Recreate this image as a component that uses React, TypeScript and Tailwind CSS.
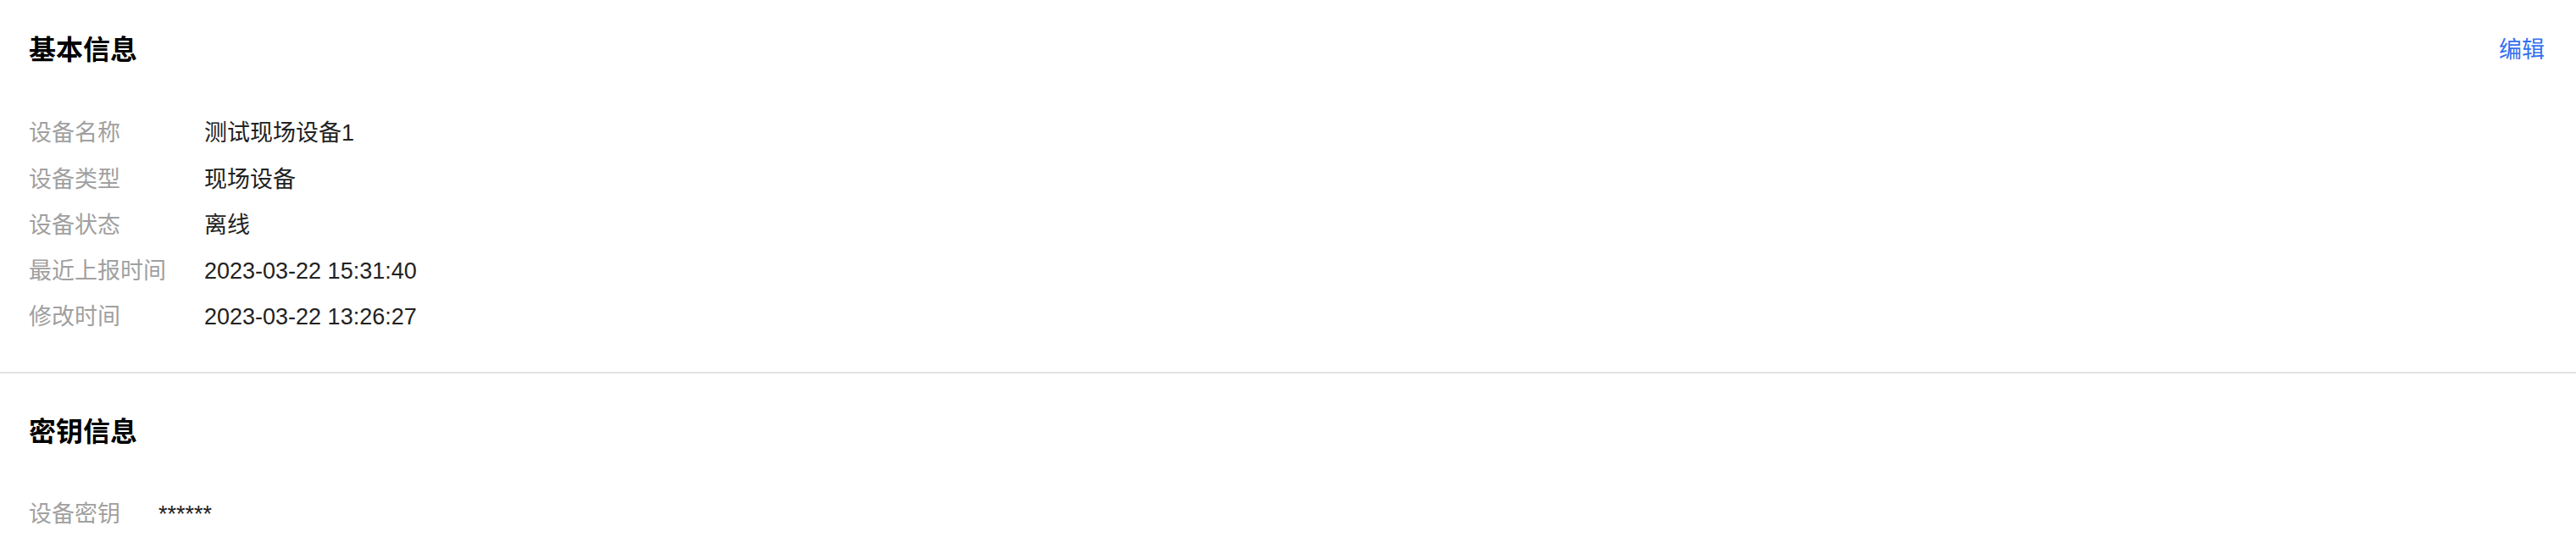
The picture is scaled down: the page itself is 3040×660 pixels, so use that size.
const basicInfo = [
  { label: "设备名称", value: "测试现场设备1" },
  { label: "设备类型", value: "现场设备" },
  { label: "设备状态", value: "离线" },
  { label: "最近上报时间", value: "2023-03-22 15:31:40" },
  { label: "修改时间", value: "2023-03-22 13:26:27" },
];

const secretInfo = [{ label: "设备密钥", value: "******" }];

const font = {
  fontFamily: '"Liberation Sans", Arial, "Noto Sans CJK SC", sans-serif',
};

function InfoTable({ rows }: { rows: { label: string; value: string }[] }) {
  return (
    <table className="border-collapse text-[27px]">
      <tbody>
        {rows.map((r) => (
          <tr key={r.label} className="h-[54.2px]">
            <td className="p-0 pr-[45px] text-[#a0a0a0] whitespace-nowrap align-middle">
              {r.label}
            </td>
            <td className="p-0 text-[#222] whitespace-nowrap align-middle">
              {r.value}
            </td>
          </tr>
        ))}
      </tbody>
    </table>
  );
}

export default function App() {
  return (
    <div className="w-[3040px] h-[660px] bg-white overflow-hidden" style={font}>
      <section className="pl-[34px] pr-[37px] pt-[39px] pb-[37.5px]">
        <div className="flex items-center justify-between h-[40px]">
          <h2 className="text-[32px] font-bold text-black leading-[40px]">
            基本信息
          </h2>
          <button type="button" className="text-[27px] text-[#3570ef] leading-[40px]">
            编辑
          </button>
        </div>
        <div className="mt-[51.5px]">
          <InfoTable rows={basicInfo} />
        </div>
      </section>
      <div className="h-[2px] bg-[#e2e2e6]" />
      <section className="pl-[34px] pr-[37px] pt-[49px]">
        <h2 className="text-[32px] font-bold text-black leading-[40px]">
          密钥信息
        </h2>
        <div className="mt-[50px]">
          <InfoTable rows={secretInfo} />
        </div>
      </section>
    </div>
  );
}
